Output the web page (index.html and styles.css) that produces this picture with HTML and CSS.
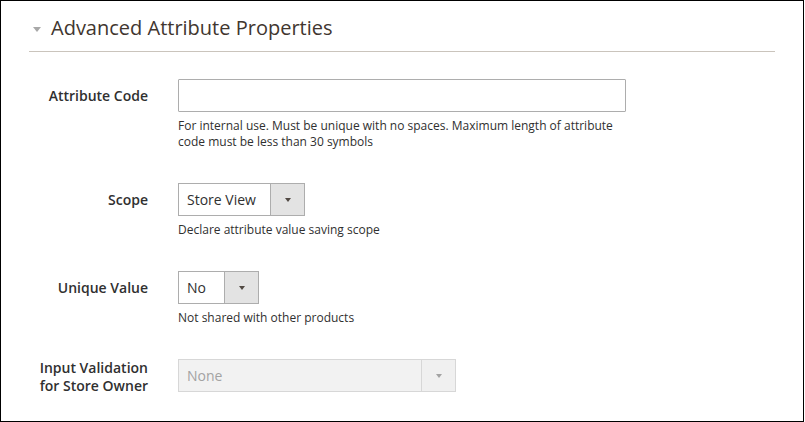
FILE: index.html
```html
<!DOCTYPE html>
<html lang="en">
<head>
<meta charset="utf-8">
<title>Advanced Attribute Properties</title>
<link rel="stylesheet" href="styles.css">
</head>
<body>
<div class="frame">
  <div class="section">
    <div class="section-title">
      <span class="caret"></span>
      <span class="title-text">Advanced Attribute Properties</span>
    </div>
    <div class="fields">
      <div class="field">
        <label class="label">Attribute Code</label>
        <div class="control"><input class="text-input" type="text"></div>
        <div class="note">For internal use. Must be unique with no spaces. Maximum length of attribute code must be less than 30 symbols</div>
      </div>
      <div class="field">
        <label class="label">Scope</label>
        <div class="control">
          <div class="select select-scope"><span class="value">Store View</span><span class="arrow"><span class="tri"></span></span></div>
        </div>
        <div class="note">Declare attribute value saving scope</div>
      </div>
      <div class="field">
        <label class="label">Unique Value</label>
        <div class="control">
          <div class="select select-unique"><span class="value">No</span><span class="arrow"><span class="tri"></span></span></div>
        </div>
        <div class="note">Not shared with other products</div>
      </div>
      <div class="field last">
        <label class="label label-two">Input Validation<br>for Store Owner</label>
        <div class="control">
          <div class="select select-validation disabled"><span class="value">None</span><span class="arrow"><span class="tri"></span></span></div>
        </div>
      </div>
    </div>
  </div>
</div>
</body>
</html>
```
FILE: styles.css
```css
html, body {
  margin: 0;
  padding: 0;
  background: #fff;
}
body {
  font-family: "Open Sans", "Liberation Sans", sans-serif;
  color: #303030;
}
.frame {
  box-sizing: border-box;
  width: 804px;
  height: 422px;
  border: 1px solid #000;
  overflow: hidden;
}
.section {
  padding: 0 28px;
}
.section-title {
  display: flex;
  align-items: center;
  margin-top: 13px;
  height: 28px;
  padding-bottom: 9px;
  border-bottom: 1px solid #cac4bc;
}
.caret {
  width: 0;
  height: 0;
  margin-left: 4px;
  margin-right: 10px;
  margin-top: 3px;
  border-left: 4.5px solid transparent;
  border-right: 4.5px solid transparent;
  border-top: 5px solid #a8a8a8;
}
.title-text {
  font-size: 20px;
  line-height: 28px;
  color: #41362f;
  font-weight: 400;
}
.fields {
  padding-top: 27px;
}
.field {
  display: grid;
  grid-template-columns: 119px 1fr;
  column-gap: 30px;
  align-items: center;
  margin-bottom: 33px;
}
.field.last {
  margin-bottom: 0;
  align-items: start;
}
.label {
  grid-column: 1;
  text-align: right;
  font-size: 14px;
  font-weight: 600;
  line-height: 18px;
  color: #303030;
}
.label-two {
  line-height: 18px;
}
.control {
  grid-column: 2;
  display: flex;
}
.note {
  grid-column: 2;
  max-width: 448px;
  margin-top: 6px;
  font-size: 12px;
  line-height: 16px;
  color: #303030;
}
.text-input {
  box-sizing: border-box;
  width: 448px;
  height: 33px;
  margin: 0;
  border: 1px solid #adadad;
  border-radius: 1px;
  background: #fff;
  padding: 0 8px;
  font-family: inherit;
  font-size: 14px;
}
.select {
  box-sizing: border-box;
  display: flex;
  height: 33px;
  border: 1px solid #adadad;
  background: #fff;
  font-size: 14px;
  line-height: 31px;
  color: #303030;
}
.select-scope { width: 127px; }
.select-unique { width: 81px; }
.select-validation { width: 278px; }
.value {
  flex: 1;
  padding-left: 8px;
}
.arrow {
  box-sizing: border-box;
  width: 34px;
  border-left: 1px solid #adadad;
  background: #e3e3e3;
  display: flex;
  align-items: center;
  justify-content: center;
}
.tri {
  width: 0;
  height: 0;
  border-left: 3.5px solid transparent;
  border-right: 3.5px solid transparent;
  border-top: 4px solid #514943;
}
.select.disabled {
  background: #f2f2f2;
  border-color: #d7d7d7;
  color: #a3a3a3;
}
.select.disabled .arrow {
  background: #f0f0f0;
  border-left-color: #d7d7d7;
}
.select.disabled .tri {
  border-top-color: #a3a3a3;
}
```
